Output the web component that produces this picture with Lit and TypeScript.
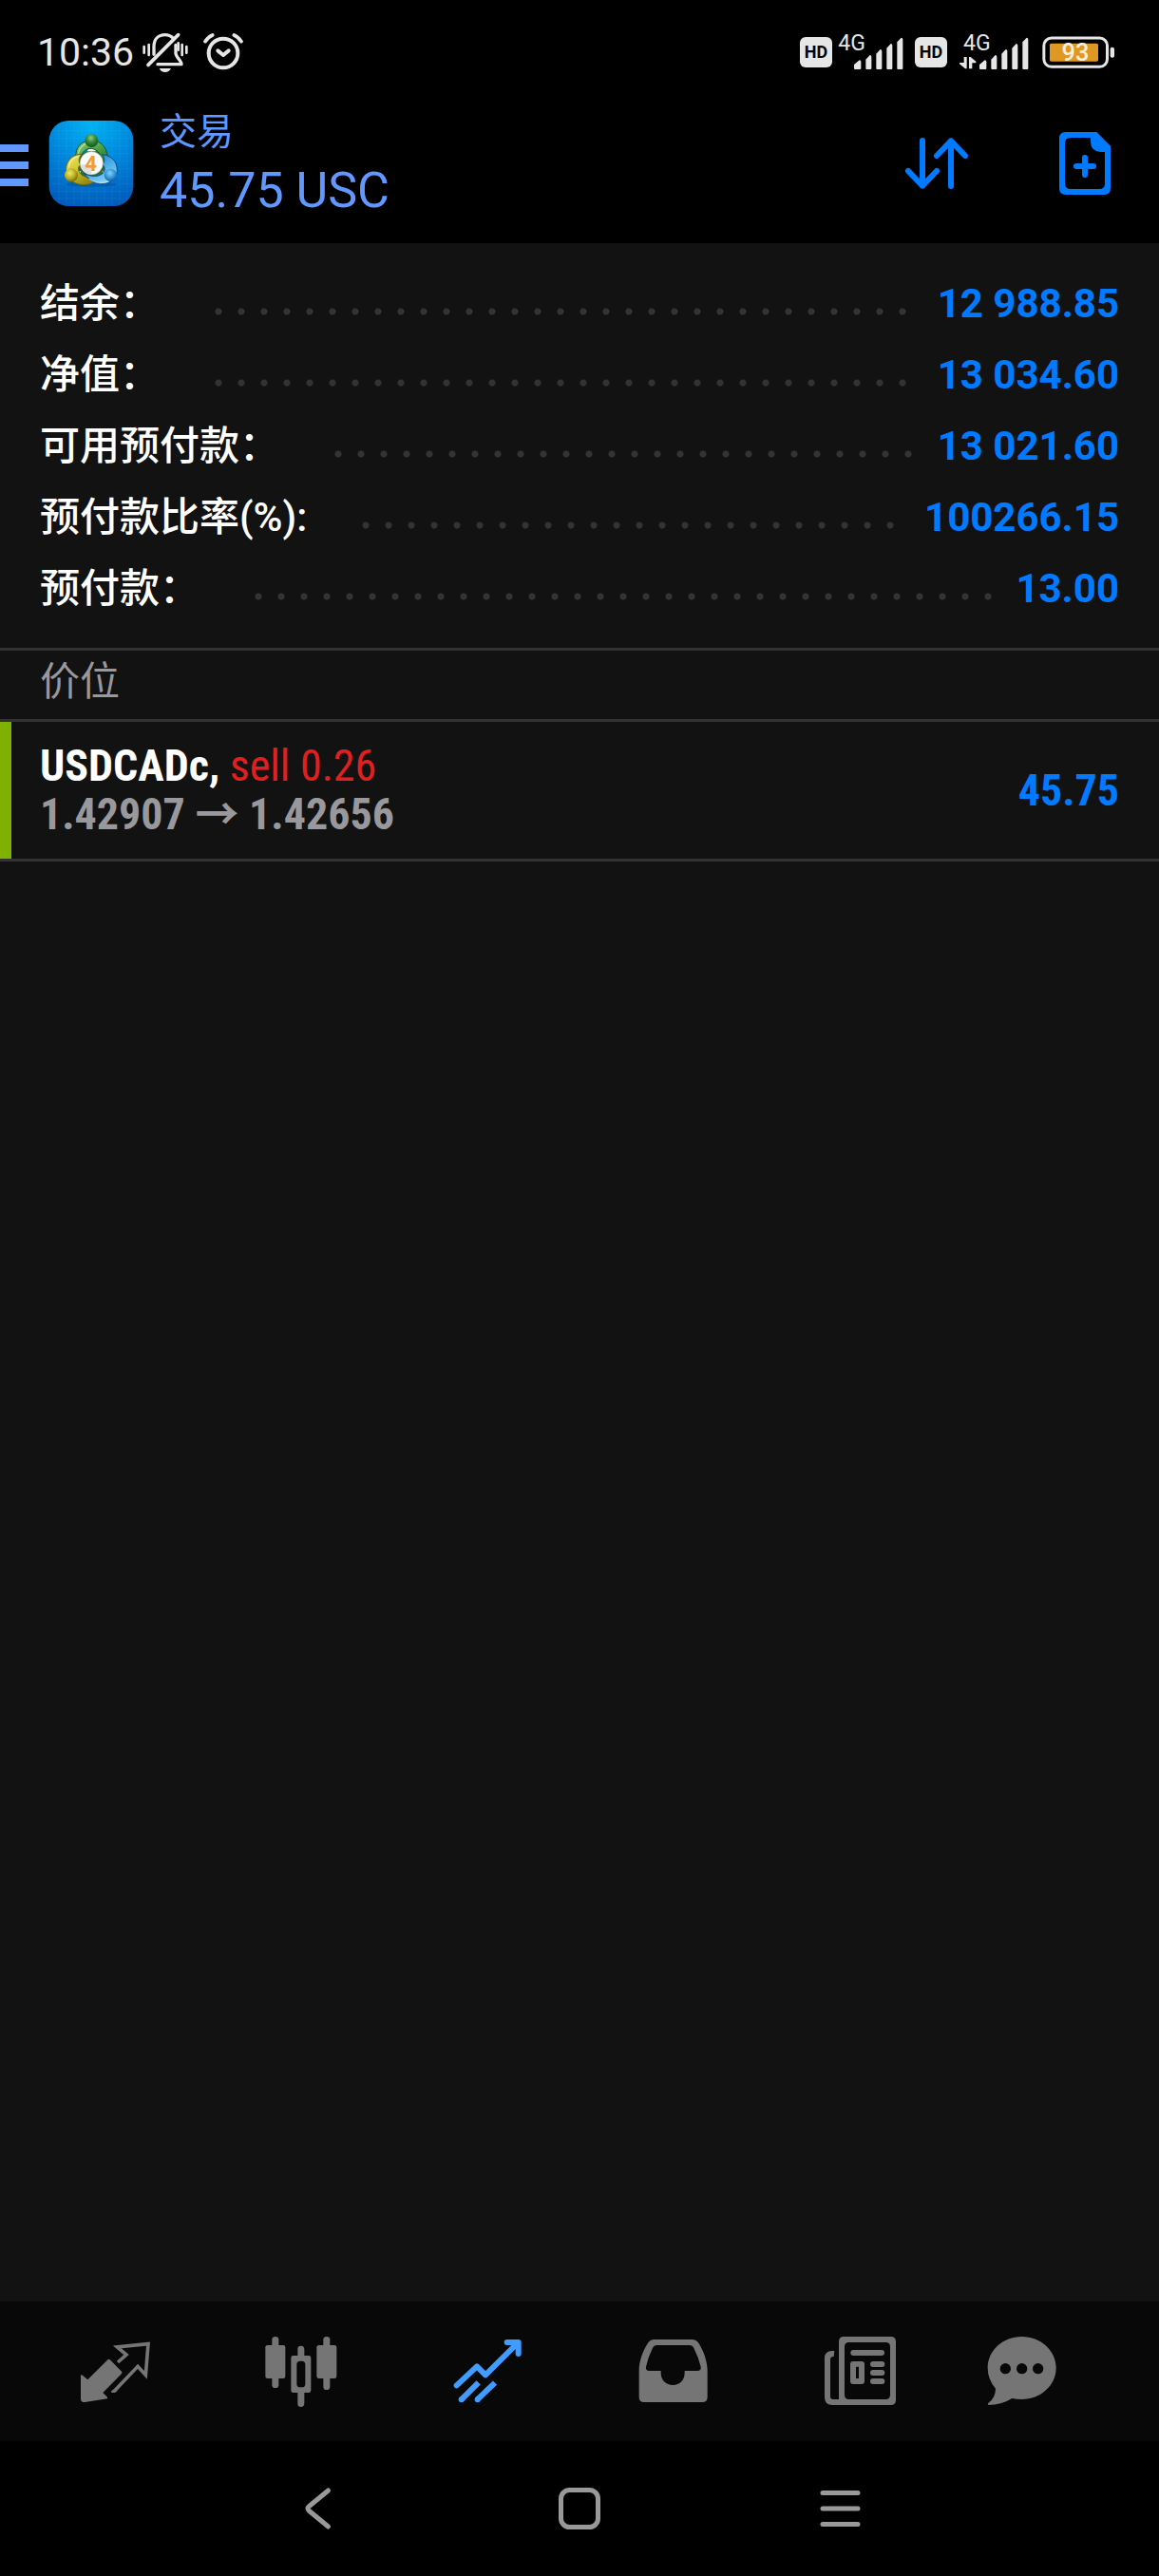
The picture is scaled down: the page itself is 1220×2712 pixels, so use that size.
import { LitElement, html, css, svg } from "lit";
import { customElement, property, state } from "lit/decorators.js";
import { classMap } from "lit/directives/class-map.js";

const FONT = css`Roboto, "Noto Sans CJK SC", sans-serif`;
const NARROW = css`"Roboto Condensed", "Liberation Sans Narrow", Roboto, "Noto Sans CJK SC", sans-serif`;

@customElement("status-bar")
class StatusBar extends LitElement {
  static styles = css`
    :host {
      display: flex;
      align-items: center;
      justify-content: space-between;
      height: 66px;
      padding: 22px 47px 0 39px;
      color: #e6e6e6;
      font-family: ${FONT};
    }
    .group {
      display: flex;
      align-items: center;
      gap: 6px;
    }
    .time {
      font-size: 41px;
      line-height: 48px;
      font-weight: 400;
      margin-right: 2px;
    }
    .alarm {
      margin-left: 8px;
    }
    .hd {
      width: 34px;
      height: 32px;
      border-radius: 6px;
      background: #e6e6e6;
      color: #000;
      font-size: 18px;
      line-height: 32px;
      font-weight: 700;
      text-align: center;
    }
    svg {
      display: block;
    }
    .net {
      font-size: 69px;
    }
    .level {
      font-size: 76px;
      font-weight: 500;
    }
  `;

  private bars(x: number) {
    const tops = [186, 170, 152, 134, 115];
    return tops.map((top, i) => {
      const left = x + i * 33 + (i === 0 ? 0 : 4);
      const width = i === 0 ? 22 : 18;
      return svg`<path fill="#e6e6e6" d="M${left} 212V${top + 14}L${left + width - 5} ${top}Q${left + width} ${top} ${left + width} ${top + 6}V212Q${left + width} 215 ${left + width - 3} 215H${left + 3}Q${left} 215 ${left} 212Z"/>`;
    });
  }

  render() {
    return html`
      <div class="group">
        <span class="time">10:36</span>
        <svg width="50" height="44" viewBox="449 99 150 132" fill="none" stroke="#e6e6e6" stroke-width="10" stroke-linecap="round" stroke-linejoin="round" role="img" aria-label="静音">
          <path d="M488 172V148C488 122 504 110 523 110C534 110 543 114 550 122"/>
          <path d="M470 205L565 110" stroke-width="11"/>
          <path d="M557 142V168C557 180 575 192 575 203H500"/>
          <path d="M505 216H542Q536 228 523.500 228T505 216Z" fill="#e6e6e6" stroke="none"/>
          <path d="M457 147V167M472 141V174M577 141V174M591 147V167" stroke-width="8"/>
          <path d="M565 136V158" stroke-width="8"/>
        </svg>
        <svg class="alarm" width="44" height="44" viewBox="640 99 132 132" fill="none" stroke="#e6e6e6" stroke-width="12" stroke-linecap="round" stroke-linejoin="round" role="img" aria-label="闹钟">
          <circle cx="706" cy="168" r="46"/>
          <path d="M689 160L706 174L723 160"/>
          <path d="M649 131Q658 117 672 111M763 131Q754 117 740 111" stroke-width="11"/>
        </svg>
      </div>
      <div class="group">
        <span class="hd">HD</span>
        <svg width="75" height="44" viewBox="186 95 225 132" role="img" aria-label="信号">
          <text class="net" x="187" y="156" fill="#e6e6e6">4G</text>
          ${this.bars(237)}
        </svg>
        <span class="hd">HD</span>
        <svg width="88" height="44" viewBox="549 95 264 132" role="img" aria-label="信号">
          <text class="net" x="582" y="156" fill="#e6e6e6">4G</text>
          <path d="M584 176H593V213H588L570 198V194H584ZM600 213V176H605L622 190V195H610V213Z" fill="#e6e6e6"/>
          ${this.bars(633)}
        </svg>
        <svg width="76" height="44" viewBox="831 97 228 132" role="img" aria-label="电量">
          <rect x="836.500" y="118" width="200" height="91" rx="24" fill="none" stroke="#e6e6e6" stroke-width="9"/>
          <rect x="855" y="135" width="153" height="57" rx="5" fill="#df9822"/>
          <rect x="1046" y="147" width="13" height="33" rx="6" fill="#e6e6e6"/>
          <text class="level" x="936" y="191" text-anchor="middle" fill="#f6f0e4">93</text>
        </svg>
      </div>
    `;
  }
}

@customElement("trade-header")
class TradeHeader extends LitElement {
  static styles = css`
    :host {
      display: flex;
      align-items: center;
      height: 168px;
      font-family: ${FONT};
      color: #6098ff;
    }
    button {
      display: flex;
      align-items: center;
      justify-content: center;
      border: 0;
      padding: 0;
      background: none;
      color: inherit;
      cursor: pointer;
    }
    svg {
      display: block;
    }
    .menu {
      padding-top: 4px;
    }
    .logo {
      margin: 0 27px 0 21px;
    }
    .four {
      font-size: 66px;
      font-weight: 700;
    }
    .titles {
      flex: 1;
      padding-bottom: 4px;
    }
    h1,
    p {
      margin: 0;
      font-weight: 400;
      line-height: 62px;
    }
    h1 {
      font-size: 39px;
    }
    p {
      font-size: 52px;
    }
    .action {
      width: 156px;
      height: 144px;
      color: #007aff;
    }
  `;

  render() {
    return html`
      <button class="menu" aria-label="菜单">
        <svg width="30" height="44" viewBox="0 0 30 44" fill="currentColor">
          <path d="M0 0H30V8H0ZM0 18H30V26H0ZM0 36H30V44H0Z"/>
        </svg>
      </button>
      <svg class="logo" width="90" height="90" viewBox="34 51 268 270" role="img" aria-label="MetaTrader 4">
        <defs>
          <radialGradient id="sky" cx="0.500" cy="0" r="1.050">
            <stop offset="0" stop-color="#00b4f4"/>
            <stop offset="0.500" stop-color="#0087dc"/>
            <stop offset="1" stop-color="#0059b8"/>
          </radialGradient>
          <linearGradient id="green" x1="0" y1="0" x2="0.600" y2="1">
            <stop offset="0" stop-color="#9bd184"/><stop offset="0.500" stop-color="#4ba549"/><stop offset="1" stop-color="#1d6b2a"/>
          </linearGradient>
          <linearGradient id="yellow" x1="0" y1="0" x2="0.600" y2="1">
            <stop offset="0" stop-color="#f1ea70"/><stop offset="0.500" stop-color="#d3c92f"/><stop offset="1" stop-color="#938a12"/>
          </linearGradient>
          <linearGradient id="blue" x1="0" y1="0" x2="0.600" y2="1">
            <stop offset="0" stop-color="#2672b8"/><stop offset="0.600" stop-color="#4fb0ea"/><stop offset="1" stop-color="#8bd3f7"/>
          </linearGradient>
          <radialGradient id="greenHead" cx="0.450" cy="0.300" r="0.700">
            <stop offset="0" stop-color="#90cf78"/><stop offset="0.500" stop-color="#36883a"/><stop offset="1" stop-color="#0f5420"/>
          </radialGradient>
          <radialGradient id="yellowHead" cx="0.400" cy="0.350" r="0.700">
            <stop offset="0" stop-color="#f0e96b"/><stop offset="0.600" stop-color="#b5a91c"/><stop offset="1" stop-color="#6c640a"/>
          </radialGradient>
          <radialGradient id="blueHead" cx="0.450" cy="0.350" r="0.700">
            <stop offset="0" stop-color="#86d1f8"/><stop offset="0.600" stop-color="#2b8fd6"/><stop offset="1" stop-color="#0c4f96"/>
          </radialGradient>
        </defs>
        <rect x="35" y="51" width="266" height="270" rx="62" fill="url(#sky)"/>
        <path d="M66 58V314M90 52V320M114 52V320M138 52V320M162 52V320M186 52V320M210 52V320M234 52V320M258 52V320M280 60V312M42 83H294M36 107H300M36 131H300M36 155H300M36 179H300M36 203H300M36 227H300M36 251H300M36 275H300M44 297H292" stroke="#7fd0ff" stroke-opacity="0.120" stroke-width="2"/>
        <ellipse cx="168" cy="252" rx="80" ry="8" fill="#003c80" opacity="0.350"/>
        <path d="M135 160L168 134L205 160L222 214L168 236L116 214Z" fill="#2b6e3c"/>
        <path d="M154 148H184L176 138H162ZM121 206L136 212L126 224ZM217 206L203 212L212 224Z" fill="#f4f6ea"/>
        <g stroke-linejoin="round" stroke-width="3">
          <path d="M120 172C114 132 142 113 169 113C201 113 224 140 219 182C215 196 205 202 197 207C204 182 203 157 183 144C164 133 145 141 139 158Z" fill="url(#green)" stroke="#17571f"/>
          <path d="M90 224C82 183 105 158 138 157C128 168 127 180 134 190C120 203 131 224 152 229L180 241C160 262 111 258 90 224Z" fill="url(#yellow)" stroke="#6c6510"/>
          <path d="M202 158C237 160 256 188 248 222C232 258 178 262 146 218C164 226 186 231 203 219C214 207 211 197 204 190C211 180 212 169 202 158Z" fill="url(#blue)" stroke="#0e4b8a"/>
        </g>
        <path d="M128 153C133 129 156 118 178 121M97 198C99 179 112 166 127 164M162 235C189 253 218 250 235 235" fill="none" stroke="#fff" stroke-opacity="0.500" stroke-width="4" stroke-linecap="round"/>
        <circle cx="169" cy="114" r="21" fill="url(#greenHead)"/>
        <circle cx="105" cy="223" r="21" fill="url(#yellowHead)"/>
        <circle cx="229" cy="223" r="20" fill="url(#blueHead)"/>
        <circle cx="169" cy="185" r="36" fill="#fafafa" stroke="#c9ccd2" stroke-width="2"/>
        <path d="M134 190A36 36 0 0 0 169 221V190Z" fill="#dcdfe4"/>
        <text class="four" x="167" y="209" text-anchor="middle" fill="#f19a3e">4</text>
      </svg>
      <div class="titles">
        <h1>交易</h1>
        <p>45.75 USC</p>
      </div>
      <button class="action" aria-label="排序">
        <svg width="72" height="72" viewBox="90 78 216 216" fill="none" stroke="currentColor" stroke-width="18" stroke-linecap="round" stroke-linejoin="round">
          <path d="M153 114V257M108 210L153 257L198 210M243 258V115M198 162L243 115L288 162"/>
        </svg>
      </button>
      <button class="action" aria-label="新订单">
        <svg width="72" height="72" viewBox="558 78 216 216" fill="currentColor">
          <path fill-rule="evenodd" d="M605 87H703L747 131V265Q747 285 727 285H605Q585 285 585 265V107Q585 87 605 87ZM621 105Q603 105 603 123V249Q603 267 621 267H711Q729 267 729 249V150H716Q684 148 684 118V105Z"/>
          <path d="M666 168V222M639 195H693" stroke="currentColor" stroke-width="18" stroke-linecap="round"/>
        </svg>
      </button>
    `;
  }
}

interface Balance {
  label: string;
  value: string;
}

@customElement("account-summary")
class AccountSummary extends LitElement {
  @property({ attribute: false }) rows: Balance[] = [];

  static styles = css`
    :host {
      display: block;
      padding: 26px 42px 25px;
      border-bottom: 3px solid #333;
      font-family: ${FONT};
      font-size: 42px;
    }
    dl {
      margin: 0;
    }
    .row {
      display: flex;
      align-items: center;
      height: 75px;
    }
    dt {
      color: #fff;
      font-weight: 500;
      line-height: 60px;
    }
    dd {
      margin: 0;
      color: #007aff;
      font-weight: 700;
      line-height: 60px;
    }
    .dots {
      flex: 1;
      height: 8px;
      margin: 16px 24px 0 50px;
      background: radial-gradient(circle, #333 0 3px, transparent 4px) 0 0 / 24px 8px repeat-x;
    }
  `;

  render() {
    return html`
      <dl>
        ${this.rows.map(
          (row) => html`
            <div class="row">
              <dt>${row.label}</dt>
              <span class="dots"></span>
              <dd>${row.value}</dd>
            </div>
          `
        )}
      </dl>
    `;
  }
}

@customElement("position-list")
class PositionList extends LitElement {
  static styles = css`
    :host {
      display: block;
      font-family: ${FONT};
    }
    h2 {
      margin: 0;
      padding: 0 42px 6px;
      border-bottom: 3px solid #333;
      color: #98989d;
      font-size: 42px;
      line-height: 66px;
      font-weight: 400;
    }
    .list {
      border-bottom: 3px solid #333;
    }
    .position {
      display: flex;
      align-items: center;
      justify-content: space-between;
      height: 144px;
      padding: 0 42px 0 30px;
      border-left: 12px solid #80b000;
      font-family: ${NARROW};
      font-size: 46px;
      line-height: 51px;
      font-weight: 700;
    }
    p {
      margin: 0;
    }
    .symbol {
      color: #fff;
    }
    .side {
      color: #e02020;
      font-weight: 400;
    }
    .prices {
      color: #98989d;
    }
    .profit {
      color: #007aff;
    }
  `;

  render() {
    return html`
      <h2>价位</h2>
      <div class="list">
        <div class="position">
          <div>
            <p class="symbol">USDCADc, <span class="side">sell 0.26</span></p>
            <p class="prices">1.42907 → 1.42656</p>
          </div>
          <span class="profit">45.75</span>
        </div>
      </div>
    `;
  }
}

const TABS = [
  {
    name: "行情",
    box: "120 162 252 252",
    art: svg`
      <path d="M138 297L157 313L221 249Q225 247 229 251L264 287Q267 290 264 294L205 354L219 368V373L148 384Q135 384 135 374V300Z"/>
      <path d="M252 258L279 234L250 210L348 200L340 298L315 271L244 346" fill="none" stroke="currentColor" stroke-width="11"/>
      <path d="M230 350L241 341L250 349L243 354H233Z"/>`,
  },
  {
    name: "图表",
    box: "707 162 252 252",
    art: svg`
      <rect x="738" y="177" width="21" height="162" rx="10"/>
      <rect x="717" y="204" width="63" height="105" rx="7"/>
      <rect x="900" y="177" width="21" height="168" rx="10"/>
      <rect x="879" y="204" width="63" height="105" rx="7"/>
      <path d="M819 237V216Q819 206 829 206T840 216V237H854Q861 237 861 244V347Q861 354 854 354H840V388Q840 399 829 399T819 388V354H805Q798 354 798 347V244Q798 237 805 237ZM827 254Q816 254 816 265V326Q816 337 827 337H832Q843 337 843 326V265Q843 254 832 254Z" fill-rule="evenodd"/>`,
  },
  {
    name: "交易",
    box: "94 162 252 252",
    art: svg`
      <g fill="none" stroke="currentColor" stroke-width="18" stroke-linejoin="round">
        <path stroke-linecap="round" d="M120 331L184 271L211 298L313 197M279 195H315V231"/>
        <path d="M134 377L189 322M184 377L241 323"/>
      </g>
      <circle cx="135" cy="376" r="9"/>
      <circle cx="186" cy="376" r="9"/>`,
  },
  {
    name: "历史",
    box: "682 162 252 252",
    art: svg`
      <path fill-rule="evenodd" d="M745 186H868Q879 186 885 194C905 224 915 258 915 285V368Q915 384 899 384H715Q699 384 699 368V285C699 256 709 224 729 194Q735 186 745 186ZM756 204Q746 204 742 213Q727 243 721 272Q719 285 732 285H768V292C768 316 785 330 806 330S843 316 843 292V285H883Q896 285 894 272Q887 243 872 213Q868 204 858 204Z"/>`,
  },
  {
    name: "新闻",
    box: "129 162 252 252",
    art: svg`
      <path fill-rule="evenodd" d="M205 177H353Q369 177 369 193V377Q369 393 353 393H169Q144 393 144 368V246Q144 222 168 222H175L173 240Q162 240 162 249V366Q162 375 171 375H189V193Q189 177 205 177ZM221 195Q207 195 207 209V361Q207 375 221 375H337Q351 375 351 361V209Q351 195 337 195Z"/>
      <rect x="226" y="219" width="107" height="18" rx="9"/>
      <path fill-rule="evenodd" d="M234 255H261Q270 255 270 264V318Q270 327 261 327H234Q225 327 225 318V264Q225 255 234 255ZM243 272V309H252V272Z"/>
      <rect x="288" y="255" width="46" height="18" rx="9"/>
      <rect x="288" y="282" width="46" height="18" rx="9"/>
      <rect x="288" y="309" width="46" height="18" rx="9"/>`,
  },
  {
    name: "消息",
    box: "643 162 252 252",
    art: svg`
      <path fill-rule="evenodd" d="M765 177C824 177 873 221 873 276S824 375 765 375Q749 375 734 372Q700 393 660 393Q655 391 659 387Q682 370 682 341Q657 312 657 276C657 221 705 177 765 177ZM713 261A17 17 0 1 0 713 295A17 17 0 1 0 713 261ZM765 261A17 17 0 1 0 765 295A17 17 0 1 0 765 261ZM816 261A17 17 0 1 0 816 295A17 17 0 1 0 816 261Z"/>`,
  },
];

@customElement("tab-bar")
class TabBar extends LitElement {
  @state() private active = 2;

  static styles = css`
    nav {
      display: grid;
      grid-template-columns: repeat(5, 4fr) 3fr;
      align-items: center;
      height: 147px;
      padding: 0 70px 0 24px;
      background: #080808;
    }
    button {
      display: flex;
      justify-content: center;
      border: 0;
      padding: 0;
      background: none;
      color: #757575;
      cursor: pointer;
    }
    .active {
      color: #409cff;
    }
    svg {
      display: block;
    }
  `;

  render() {
    return html`
      <nav>
        ${TABS.map(
          (tab, i) => html`
            <button
              class=${classMap({ active: i === this.active })}
              aria-label=${tab.name}
              @click=${() => (this.active = i)}
            >
              <svg width="84" height="84" viewBox=${tab.box} fill="currentColor">${tab.art}</svg>
            </button>
          `
        )}
      </nav>
    `;
  }
}

@customElement("system-nav")
class SystemNav extends LitElement {
  static styles = css`
    nav {
      display: grid;
      grid-template-columns: repeat(3, 1fr);
      align-items: center;
      height: 142px;
      padding: 0 198px;
    }
    button {
      display: flex;
      justify-content: center;
      border: 0;
      padding: 0;
      background: none;
      color: #999;
      cursor: pointer;
    }
    svg {
      display: block;
    }
  `;

  render() {
    return html`
      <nav>
        <button aria-label="返回">
          <svg width="48" height="48" viewBox="0 0 48 48" fill="none" stroke="currentColor" stroke-width="5" stroke-linecap="round">
            <path d="M34.500 5L14.500 21.500Q11.500 24 14.500 26.500L34.500 43"/>
          </svg>
        </button>
        <button aria-label="主页">
          <svg width="48" height="48" viewBox="0 0 48 48" fill="none" stroke="currentColor" stroke-width="5">
            <rect x="4.500" y="4.500" width="39" height="39" rx="9"/>
          </svg>
        </button>
        <button aria-label="最近任务">
          <svg width="48" height="48" viewBox="0 0 48 48" fill="none" stroke="currentColor" stroke-width="5" stroke-linecap="round">
            <path d="M5 7.500H42M5 24H42M5 40.500H42"/>
          </svg>
        </button>
      </nav>
    `;
  }
}

@customElement("app-root")
class AppRoot extends LitElement {
  static styles = css`
    :host {
      display: flex;
      flex-direction: column;
      min-height: 100vh;
      background: #000;
    }
    main {
      flex: 1;
      background: #121212;
    }
  `;

  private rows: Balance[] = [
    { label: "结余：", value: "12 988.85" },
    { label: "净值：", value: "13 034.60" },
    { label: "可用预付款：", value: "13 021.60" },
    { label: "预付款比率(%):", value: "100266.15" },
    { label: "预付款：", value: "13.00" },
  ];

  render() {
    return html`
      <status-bar></status-bar>
      <trade-header></trade-header>
      <main>
        <account-summary .rows=${this.rows}></account-summary>
        <position-list></position-list>
      </main>
      <tab-bar></tab-bar>
      <system-nav></system-nav>
    `;
  }
}
